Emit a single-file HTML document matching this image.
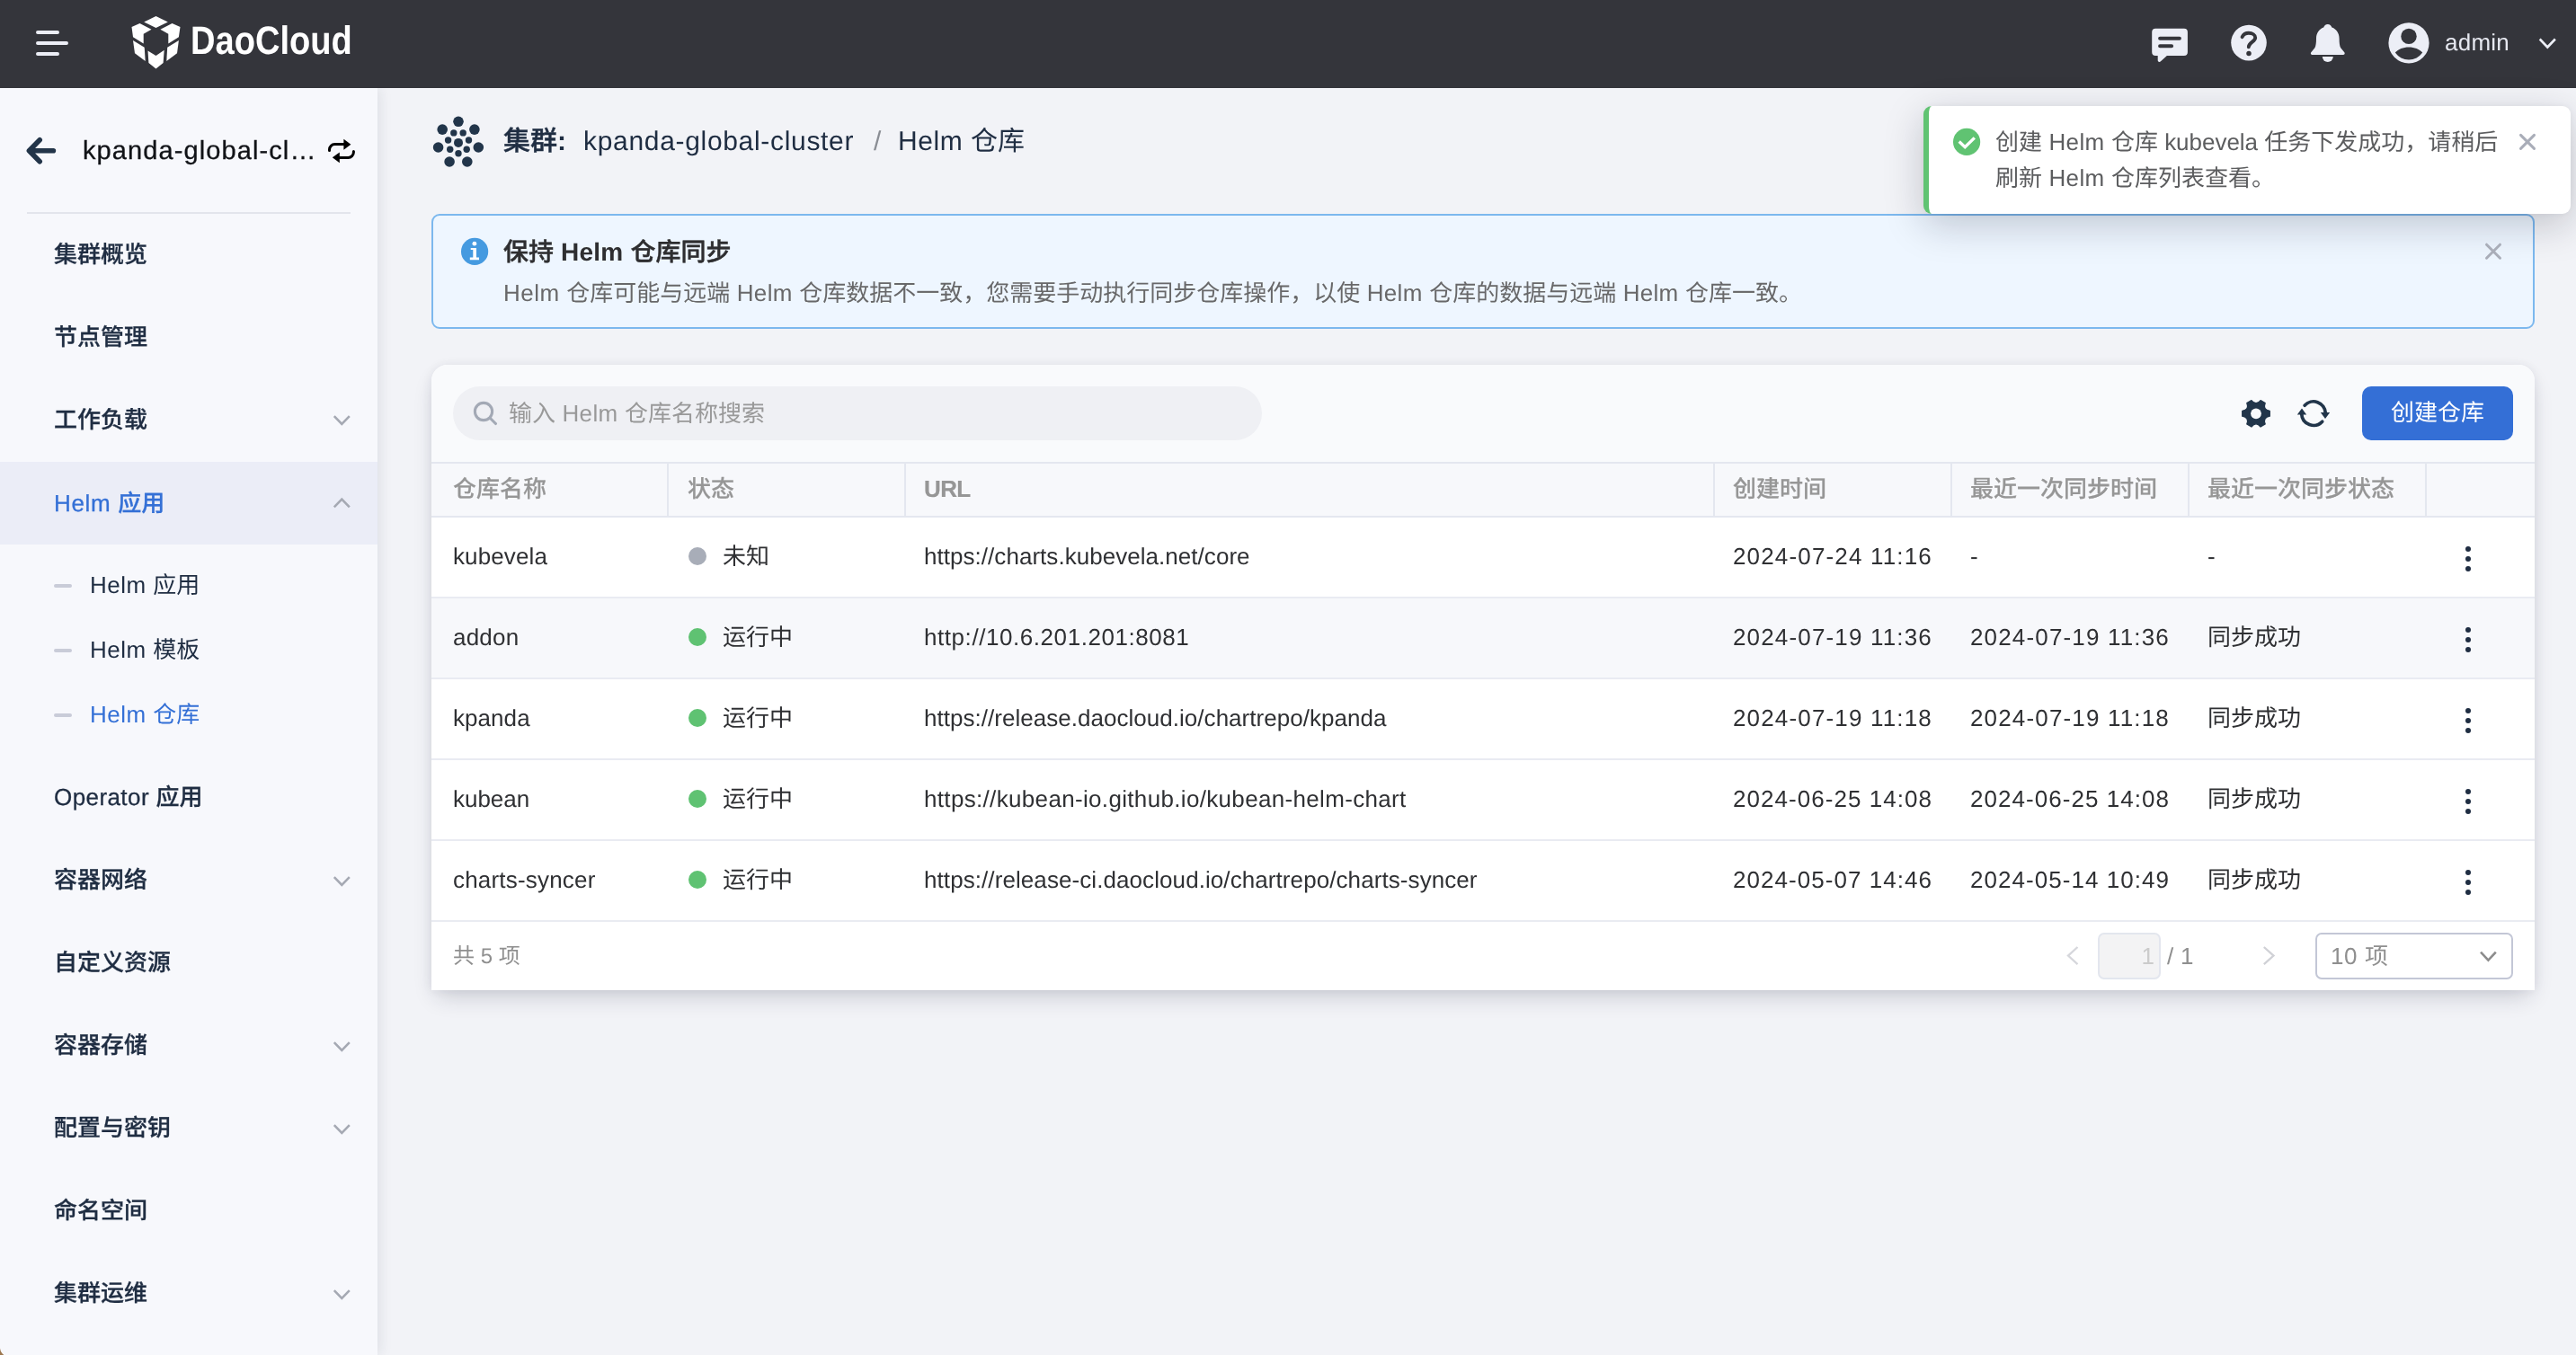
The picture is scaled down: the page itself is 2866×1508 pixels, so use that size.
<!DOCTYPE html>
<html lang="zh-CN">
<head>
<meta charset="utf-8">
<title>Helm 仓库</title>
<style>
*{box-sizing:border-box;margin:0;padding:0}
html,body{width:2866px;height:1508px;overflow:hidden}
body{position:relative;background:#f2f3f7;font-family:"Liberation Sans","Noto Sans CJK SC",sans-serif;font-size:26px;color:#333;-webkit-font-smoothing:antialiased;text-rendering:geometricPrecision}
#hdr,#side,#bc,#alert,#cardin,#toast{will-change:transform}
.abs{position:absolute}
/* header */
#hdr{position:absolute;left:0;top:0;width:2866px;height:98px;background:#34353b;z-index:5}
#hdr svg{position:absolute}
#brand{position:absolute;left:211.5px;top:16px;font-size:44px;line-height:60px;font-weight:700;color:#fff;transform-origin:0 50%;transform:scaleX(.865);letter-spacing:0}
#admin{position:absolute;left:2720px;top:27px;line-height:40px;font-size:26px;color:#e6e8f0}
/* sidebar */
#side{position:absolute;left:0;top:98px;width:420px;height:1410px;background:#f7f8fc;box-shadow:2px 0 14px rgba(30,35,60,.10);z-index:3}
#side .cname{position:absolute;left:92px;top:49.6px;font-size:29px;line-height:40px;color:#111317;white-space:nowrap;-webkit-text-stroke:.3px}
#side .div{position:absolute;left:30px;top:138px;width:360px;height:2px;background:#e3e5ec}
.mi{position:absolute;left:0;width:420px;height:92px;line-height:92px;padding-left:60px;font-size:26px;font-weight:500;color:#1f2d42;white-space:nowrap;-webkit-text-stroke:.3px}
.mi.act{background:#ebedf7;color:#3470d6}
.mi svg{position:absolute;left:371px;top:40px}
.si{position:absolute;left:0;width:420px;height:72px;line-height:73px;padding-left:100px;font-size:26px;font-weight:400;color:#1f2d42;white-space:nowrap}
.si i{position:absolute;left:60px;top:35px;width:20px;height:4px;border-radius:2px;background:#c9ccd8}
.si.act{color:#3470d6}
/* main */
#main{position:absolute;left:420px;top:98px;width:2446px;height:1410px;background:#f2f3f7}
#bc{position:absolute;left:560px;top:136px;line-height:44px;font-size:30px;color:#1f2d42;white-space:nowrap}
.lb{font-weight:700!important;-webkit-text-stroke:0!important}
#bc b{font-weight:500;font-size:30px;-webkit-text-stroke:.45px}
#alert{position:absolute;left:480px;top:238px;width:2340px;height:128px;border:2px solid #7cb8ee;border-radius:9px;background:#eef6ff}
#alert .t{position:absolute;left:78px;top:18.5px;line-height:44px;font-size:28px;font-weight:500;color:#2e2e30;white-space:nowrap;-webkit-text-stroke:.45px}
#alert .d{position:absolute;left:78px;top:64px;line-height:44px;font-size:26px;color:#686869;white-space:nowrap}
#card{position:absolute;left:480px;top:406px;width:2340px;height:696px;background:#fff;border-radius:18px 18px 0 0;box-shadow:0 12px 26px -6px rgba(30,35,60,.20), 0 0 12px rgba(30,35,60,.065)}
#cardin{position:absolute;left:0;top:0;width:2340px;height:696px;border-radius:18px 18px 0 0;overflow:hidden}
#tb{position:absolute;left:0;top:0;width:2340px;height:108px;background:#f9fafc}
#search{position:absolute;left:24px;top:24px;width:900px;height:60px;border-radius:30px;background:#eff0f4}
#search>span{position:absolute;left:62px;top:8px;line-height:44px;font-size:26px;color:#999;white-space:nowrap}
#btn{position:absolute;left:2148px;top:24px;width:168px;height:60px;border-radius:10px;background:#346fd6;color:#fff;font-size:26px;line-height:59px;text-align:center}
#th{position:absolute;left:0;top:108px;width:2340px;height:62px;background:#f7f8fb;border-top:2px solid #e4e7ef;border-bottom:2px solid #e4e7ef}
#th>span{position:absolute;top:0;line-height:57px;font-size:26px;font-weight:500;color:#969696;white-space:nowrap;-webkit-text-stroke:.2px}
#th i{position:absolute;top:0;width:2px;height:58px;background:#e4e7ef}
.row{position:absolute;left:0;width:2340px;height:90px;border-bottom:2px solid #e9ebf2;background:#fff}
.row.hov{background:#f7f8fb}
.row>span{position:absolute;top:0;line-height:87px;font-size:26px;color:#2f3033;white-space:nowrap}
.row em{position:absolute;left:286px;top:33.3px;width:20px;height:20px;border-radius:50%;background:#5fc272}
.row em.g{background:#a8adb8}
.row u{position:absolute;left:2262.8px;top:31.5px;width:6.4px;height:6.4px;border-radius:50%;background:#1f2d42;box-shadow:0 11px 0 #1f2d42,0 22px 0 #1f2d42}
#pg{position:absolute;left:0;top:620px;width:2340px;height:76px;background:#fff;color:#8f8f8f;font-size:24px}
#pg>span{position:absolute;line-height:40px;white-space:nowrap}
#toast{position:absolute;left:2140px;top:118px;width:720px;height:120px;border-radius:9px;background:#fff;border-left:6px solid #60c372;box-shadow:0 12px 44px rgba(15,20,40,.21),0 0 8px rgba(15,20,40,.05);z-index:9}
#toast p{position:absolute;left:74px;top:19.5px;width:600px;line-height:40px;font-size:26px;color:#5c5d5f;white-space:nowrap}
</style>
</head>
<body>
<div id="main"></div>

<div id="hdr">
  <div id="brand">DaoCloud</div>
  <div id="admin"><span style="letter-spacing:0.23px">admin</span></div>
</div>

<div id="side">
  <div class="cname"><span style="letter-spacing:1.1px">kpanda-global-cl…</span></div>
  <div class="div"></div>
  <div class="mi" style="top:139px">集群概览</div>
  <div class="mi" style="top:231px">节点管理</div>
  <div class="mi" style="top:323px">工作负载</div>
  <div class="mi act" style="top:416px"><span style="letter-spacing:0.66px">Helm </span>应用</div>
  <div class="si" style="top:517px"><i></i><span style="letter-spacing:0.47px">Helm </span>应用</div>
  <div class="si" style="top:589px"><i></i><span style="letter-spacing:0.47px">Helm </span>模板</div>
  <div class="si act" style="top:661px"><i></i><span style="letter-spacing:0.47px">Helm </span>仓库</div>
  <div class="mi" style="top:743px"><span style="letter-spacing:0.42px">Operator </span>应用</div>
  <div class="mi" style="top:835px">容器网络</div>
  <div class="mi" style="top:927px">自定义资源</div>
  <div class="mi" style="top:1019px">容器存储</div>
  <div class="mi" style="top:1111px">配置与密钥</div>
  <div class="mi" style="top:1203px">命名空间</div>
  <div class="mi" style="top:1295px">集群运维</div>
</div>

<div id="bc"><b>集群<b class="lb">:</b></b><span class="abs" style="left:89px"><span style="letter-spacing:0.68px">kpanda-global-cluster</span></span><span class="abs" style="left:412px;color:#8a8d94">/</span><span class="abs" style="left:439px"><span style="letter-spacing:0.54px">Helm </span>仓库</span></div>

<div id="alert">
  <div class="t">保持<b class="lb"><span style="letter-spacing:0.23px"> Helm </span></b>仓库同步</div>
  <div class="d"><span style="letter-spacing:0.47px">Helm </span>仓库可能与远端<span style="letter-spacing:0.3px"> Helm </span>仓库数据不一致，您需要手动执行同步仓库操作，以使<span style="letter-spacing:0.3px"> Helm </span>仓库的数据与远端<span style="letter-spacing:0.3px"> Helm </span>仓库一致。</div>
</div>

<div id="card"><div id="cardin">
  <div id="tb">
    <div id="search"><span>输入<span style="letter-spacing:0.3px"> Helm </span>仓库名称搜索</span></div>
    <div id="btn">创建仓库</div>
  </div>
  <div id="th">
    <span style="left:24px">仓库名称</span><i style="left:262px"></i>
    <span style="left:285px">状态</span><i style="left:526px"></i>
    <span style="left:548px"><b><span style="letter-spacing:-0.6px">URL</span></b></span><i style="left:1426px"></i>
    <span style="left:1448px">创建时间</span><i style="left:1690px"></i>
    <span style="left:1712px">最近一次同步时间</span><i style="left:1954px"></i>
    <span style="left:1976px">最近一次同步状态</span><i style="left:2218px"></i>
  </div>
  <div class="row" style="top:170px"><span style="left:24px"><span style="letter-spacing:0.11px">kubevela</span></span><em class="g"></em><span style="left:324px">未知</span><span style="left:548px"><span style="letter-spacing:0.04px">https://charts.kubevela.net/core</span></span><span style="left:1448px"><span style="letter-spacing:1.16px">2024-07-24 11:16</span></span><span style="left:1712px">-</span><span style="left:1976px">-</span><u></u></div>
  <div class="row hov" style="top:260px"><span style="left:24px"><span style="letter-spacing:0.2px">addon</span></span><em></em><span style="left:324px">运行中</span><span style="left:548px"><span style="letter-spacing:0.56px">http://10.6.201.201:8081</span></span><span style="left:1448px"><span style="letter-spacing:1.16px">2024-07-19 11:36</span></span><span style="left:1712px"><span style="letter-spacing:1.16px">2024-07-19 11:36</span></span><span style="left:1976px">同步成功</span><u></u></div>
  <div class="row" style="top:350px"><span style="left:24px"><span style="letter-spacing:0.06px">kpanda</span></span><em></em><span style="left:324px">运行中</span><span style="left:548px"><span style="letter-spacing:0.03px">https://release.daocloud.io/chartrepo/kpanda</span></span><span style="left:1448px"><span style="letter-spacing:1.16px">2024-07-19 11:18</span></span><span style="left:1712px"><span style="letter-spacing:1.16px">2024-07-19 11:18</span></span><span style="left:1976px">同步成功</span><u></u></div>
  <div class="row" style="top:440px"><span style="left:24px"><span style="letter-spacing:-0.03px">kubean</span></span><em></em><span style="left:324px">运行中</span><span style="left:548px"><span style="letter-spacing:0.33px">https://kubean-io.github.io/kubean-helm-chart</span></span><span style="left:1448px"><span style="letter-spacing:1.04px">2024-06-25 14:08</span></span><span style="left:1712px"><span style="letter-spacing:1.04px">2024-06-25 14:08</span></span><span style="left:1976px">同步成功</span><u></u></div>
  <div class="row" style="top:530px"><span style="left:24px"><span style="letter-spacing:0.19px">charts-syncer</span></span><em></em><span style="left:324px">运行中</span><span style="left:548px"><span style="letter-spacing:0.08px">https://release-ci.daocloud.io/chartrepo/charts-syncer</span></span><span style="left:1448px"><span style="letter-spacing:1.04px">2024-05-07 14:46</span></span><span style="left:1712px"><span style="letter-spacing:1.04px">2024-05-14 10:49</span></span><span style="left:1976px">同步成功</span><u></u></div>
  <div id="pg">
    <span style="left:24px;top:19px">共 5 项</span>
    <div style="position:absolute;left:1853.5px;top:12px;width:70.5px;height:51.5px;border:2px solid #e3e6ee;border-radius:7px;background:#f3f3f4"></div>
    <span style="left:1902.5px;top:17.5px;color:#cbcbcb;font-size:26px">1</span>
    <span style="left:1931px;top:17.5px;font-size:26px"><span style="letter-spacing:0.24px">/ 1</span></span>
    <div style="position:absolute;left:2096px;top:12px;width:220px;height:51.5px;border:2px solid #c3c7d6;border-radius:7px;background:#fff"></div>
    <span style="left:2113px;top:17.5px;font-size:26px"><span style="letter-spacing:0.58px">10 </span>项</span>
  </div>
</div></div>

<div id="toast">
  <p>创建<span style="letter-spacing:0.3px"> Helm </span>仓库<span style="letter-spacing:-0.03px"> kubevela </span>任务下发成功，请稍后<br>刷新<span style="letter-spacing:0.3px"> Helm </span>仓库列表查看。</p>
</div>
<svg id="ico" width="2866" height="1508" viewBox="0 0 2866 1508" style="position:absolute;left:0;top:0;z-index:20;pointer-events:none">
<g fill="none" stroke="#eceef6" stroke-width="4" stroke-linecap="round"><path d="M42 36h22M42 48h32M42 60h22"/></g>
<g fill="#fff"><path d="M173.5 17.9 186.8 24.5 173.5 31.1 160.2 24.5Z"/><path d="M146.5 30 155.5 26.1 168.5 32.8 159.7 37.7 159.7 48.4 148 41.2Z"/><path d="M200.5 30 191.5 26.1 178.4 32.8 187.3 37.7 187.3 48.4 198.9 41.2Z"/><path d="M148 45 160.7 52.7 161.7 67.9 150 59.2Z"/><path d="M198.9 45 186.2 52.7 185.3 67.9 197 59.2Z"/><path d="M164.5 56.4 173.5 62 182.7 55.8 181.6 70.1 173.5 76.6 165.4 70.1Z"/></g>
<g><path d="M2398.2 31.7h31.7a4 4 0 0 1 4 4v22.4a4 4 0 0 1 -4 4h-19l-7.2 6.4a1.8 1.8 0 0 1 -3 -1.3v-5.1h-2.5a4 4 0 0 1 -4 -4v-22.4a4 4 0 0 1 4 -4z" fill="#eceef6"/><path d="M2403.1 42.7h21.8M2403.1 51.3h13" stroke="#34353b" stroke-width="4" stroke-linecap="round" fill="none"/></g>
<g><circle cx="2502" cy="47.6" r="19.8" fill="#eceef6"/><path d="M2494.6 41.2C2496 38.4 2498.6 36.8 2501.8 36.8C2506 36.8 2509.2 39 2509.2 42C2509.2 46.5 2502 46.8 2501.8 52.3" fill="none" stroke="#34353b" stroke-width="3.9" stroke-linecap="round"/><circle cx="2502" cy="59.6" r="2.75" fill="#34353b"/></g>
<g fill="#eceef6"><path d="M2589.8 27c2.3 0 4 1.5 4.6 3.6 5.2 1.9 8.2 6.600 8.2 12.4 0 4.600 .4 8.300 1.600 10.300l3.900 4.600c1.300 1.600 .3 3.100 -1.600 3.100h-33.400c-1.900 0 -2.900 -1.500 -1.600 -3.100l3.900 -4.600c1.200 -2 1.600 -5.700 1.600 -10.300 0 -5.800 3 -10.500 8.200 -12.400 .6 -2.100 2.300 -3.600 4.600 -3.600z"/><path d="M2583.800 63h12a6 6 0 0 1 -12 0z"/></g>
<g><circle cx="2680" cy="47.8" r="22.6" fill="#eceef6"/><circle cx="2680" cy="40.400" r="8.700" fill="#34353b"/><path d="M2664.800 58.600c3.500 -3.900 8.900 -6.100 15.200 -6.100s11.700 2.200 15.200 6.100a18.600 18.600 0 0 1 -30.400 0z" fill="#34353b"/></g>
<path d="M0 1500.5Q.6 1505 4.3 1508H0Z" fill="#9c774e"/>
<path d="M2825.700 43.500L2834.300 52.500L2842.900 43.500" fill="none" stroke="#eceef6" stroke-width="2.600"/>
<path d="M59.400 167.700H33M44.200 155.800L32.400 167.700L44.200 179.700" fill="none" stroke="#233549" stroke-width="5.600" stroke-linecap="round" stroke-linejoin="round"/>
<g fill="none" stroke="#000" stroke-width="3" stroke-linecap="round"><path d="M366.500 167.600v-1a6 6 0 0 1 6 -6h10.500"/><path d="M393.400 168.400v1a6 6 0 0 1 -6 6h-10"/></g><path d="M382.400 154.800L390.400 160.700L382.400 166.800Z" fill="#000"/><path d="M377.800 169.400L369.800 175.300L377.800 181.200Z" fill="#000"/>
<g fill="#22354a"><circle cx="510" cy="135.3" r="5.800"/><circle cx="492.2" cy="144.1" r="5.800"/><circle cx="527.9" cy="144.1" r="5.800"/><circle cx="487.6" cy="164" r="5.800"/><circle cx="532.3" cy="164" r="5.800"/><circle cx="500.1" cy="180" r="5.800"/><circle cx="519.8" cy="180" r="5.800"/><circle cx="510" cy="158.900" r="5"/><circle cx="504.8" cy="147.9" r="3.700"/><circle cx="515.2" cy="147.9" r="3.700"/><circle cx="498.6" cy="156" r="3.700"/><circle cx="521.5" cy="156" r="3.700"/><circle cx="500.7" cy="166.3" r="3.700"/><circle cx="519.2" cy="166.3" r="3.700"/><circle cx="510" cy="170.8" r="3.700"/></g>
<path d="M371.8 463.1 L380.3 471.9 L388.8 463.1" fill="none" stroke="#a5a9b3" stroke-width="2.6"/>
<path d="M371.8 976.1 L380.3 984.9 L388.8 976.1" fill="none" stroke="#a5a9b3" stroke-width="2.6"/>
<path d="M371.8 1160.2 L380.3 1168.8 L388.8 1160.2" fill="none" stroke="#a5a9b3" stroke-width="2.6"/>
<path d="M371.8 1252.2 L380.3 1260.8 L388.8 1252.2" fill="none" stroke="#a5a9b3" stroke-width="2.6"/>
<path d="M371.8 1436.2 L380.3 1444.8 L388.8 1436.2" fill="none" stroke="#a5a9b3" stroke-width="2.6"/>
<path d="M371.8 564.4 L380.3 555.6 L388.8 564.4" fill="none" stroke="#a5a9b3" stroke-width="2.6"/>
<g><circle cx="528.100" cy="279.900" r="15.100" fill="#459ae0"/><circle cx="527.900" cy="271.200" r="2.400" fill="#fff"/><path d="M523.700 276.100h6.300v10.300h3v2.800h-10.200v-2.800h3.500v-8.300h-2.600z" fill="#fff"/></g>
<path d="M2766.5 272.2L2781.5 287.2M2781.5 272.2L2766.5 287.2" fill="none" stroke="#a9adb8" stroke-width="3" stroke-linecap="round"/>
<path d="M2804.5 150.4L2819.5 165.4M2819.5 150.4L2804.5 165.4" fill="none" stroke="#a9adb8" stroke-width="3" stroke-linecap="round"/>
<g><circle cx="2188.100" cy="157.900" r="15.100" fill="#60c372"/><path d="M2179.700 157.500L2186.200 163.700L2196.800 153.400" fill="none" stroke="#fff" stroke-width="3.400"/></g>
<g fill="none" stroke="#a3a9b5" stroke-width="3.100"><circle cx="538" cy="458" r="9.600"/><path d="M545 465L551.500 471.500" stroke-linecap="round"/></g>
<g transform="translate(2510 460.300)"><path d="M15.31 -2.98L15.31 2.98Q7.27 4.20 10.23 11.77L5.08 14.75Q0.00 8.40 -5.08 14.75L-10.23 11.77Q-7.27 4.20 -15.31 2.98L-15.31 -2.98Q-7.27 -4.20 -10.23 -11.77L-5.08 -14.75Q-0.00 -8.40 5.08 -14.75L10.23 -11.77Q7.27 -4.20 15.31 -2.98Z" fill="#22354a" stroke="#22354a" stroke-width="1.2" stroke-linejoin="round"/><circle r="5.900" fill="#f9fafc"/></g>
<g><path d="M2564.1 451.2A13.35 13.35 0 0 1 2587.3 459.6M2583.7 469.2A13.35 13.35 0 0 1 2560.7 460.6" fill="none" stroke="#22354a" stroke-width="3.700" stroke-linecap="round"/><path d="M2581.800 459.100h10.400l-5.200 7z" fill="#22354a"/><path d="M2555.800 461.600h10.400l-5.200 -7z" fill="#22354a"/></g>
<path d="M2311.5 1054L2301 1063.6L2311.5 1073.2" fill="none" stroke="#d6d7dc" stroke-width="2.3"/>
<path d="M2518.8 1054L2529.5 1063.6L2518.8 1073.2" fill="none" stroke="#d0d1d6" stroke-width="2.3"/>
<path d="M2760 1059.6L2768.4 1068.6L2776.8 1059.6" fill="none" stroke="#8c8c8c" stroke-width="2.6"/>
</svg>
</body>
</html>
